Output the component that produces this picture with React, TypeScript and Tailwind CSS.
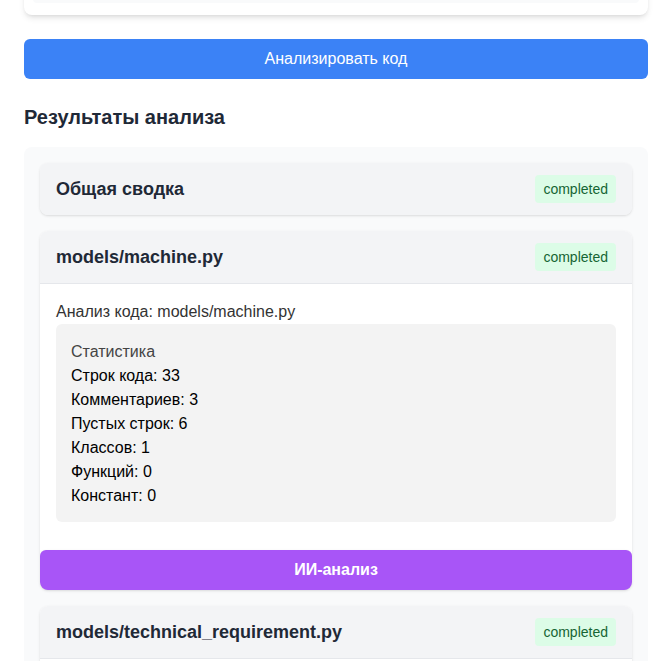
const stats = [
  "Строк кода: 33",
  "Комментариев: 3",
  "Пустых строк: 6",
  "Классов: 1",
  "Функций: 0",
  "Констант: 0",
];

const Badge = () => (
  <span className="rounded bg-[#dcfce7] px-2 py-1 text-sm leading-5 text-[#166534]">
    completed
  </span>
);

const CardHeader = ({ title, bordered }: { title: string; bordered?: boolean }) => (
  <div
    className={`flex items-center justify-between bg-[#f3f4f6] px-4 py-3 ${
      bordered ? "border-b border-[#e5e7eb]" : ""
    }`}
  >
    <h3 className="text-lg font-bold leading-7 text-[#1f2937]">{title}</h3>
    <Badge />
  </div>
);

export default function App() {
  return (
    <div className="min-h-screen overflow-hidden bg-white px-6 font-['Liberation_Sans',Arial,sans-serif] text-base">
      {/* tail of the upload card above (page is scrolled) */}
      <div className="-mt-[45px] rounded-lg bg-white px-[9px] pb-3 pt-2 shadow-md">
        <div className="h-10 rounded bg-[#f9fafb]" />
      </div>

      <button className="mt-6 h-10 w-full rounded-md bg-[#3b82f6] text-base text-white">
        Анализировать код
      </button>

      <h2 className="mt-6 mb-4 text-xl font-bold leading-7 text-[#1f2937]">
        Результаты анализа
      </h2>

      <div className="flex flex-col gap-4 rounded-lg bg-[#f9fafb] p-4">
        <div className="overflow-hidden rounded-lg shadow">
          <CardHeader title="Общая сводка" />
        </div>

        <div className="overflow-hidden rounded-lg bg-white shadow">
          <CardHeader title="models/machine.py" bordered />
          <div className="p-4 pb-7">
            <p className="leading-6 text-[#333]">Анализ кода: models/machine.py</p>
            <div className="rounded-md bg-[#f3f3f3] px-[15px] pb-[14px] pt-4">
              <p className="leading-6 text-[#444]">Статистика</p>
              {stats.map((s) => (
                <p key={s} className="leading-6 text-black">
                  {s}
                </p>
              ))}
            </div>
          </div>
          <button className="h-10 w-full rounded-md bg-[#a855f7] font-bold text-white shadow">
            ИИ-анализ
          </button>
        </div>

        <div className="overflow-hidden rounded-lg bg-white shadow">
          <CardHeader title="models/technical_requirement.py" bordered />
          <div className="h-40 p-4" />
        </div>
      </div>
    </div>
  );
}
